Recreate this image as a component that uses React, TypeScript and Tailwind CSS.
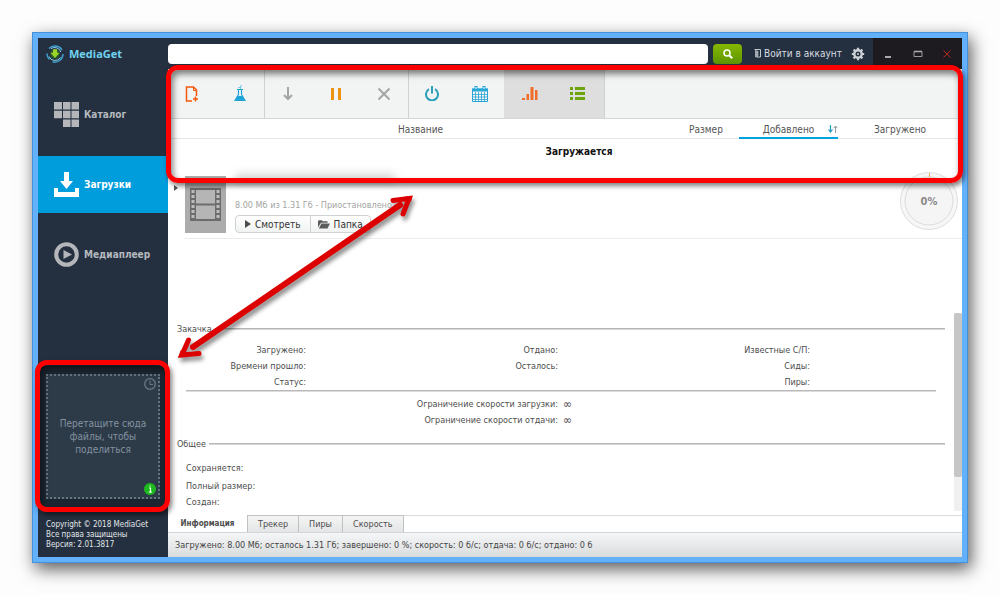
import type { ReactNode } from "react";

const nav = [
  { name: "Каталог", icon: <CatalogIcon />, active: false },
  { name: "Загрузки", icon: <DownloadsIcon />, active: true },
  { name: "Медиаплеер", icon: <PlayerIcon />, active: false },
];

const toolbar = [
  {
    id: "files",
    pressed: false,
    tools: [
      { name: "Добавить файл", icon: <AddFileIcon /> },
      { name: "Лаборатория", icon: <FlaskIcon /> },
    ],
  },
  {
    id: "state",
    pressed: false,
    tools: [
      { name: "Запустить", icon: <DownIcon /> },
      { name: "Пауза", icon: <PauseIcon /> },
      { name: "Удалить", icon: <RemoveIcon /> },
    ],
  },
  {
    id: "plan",
    pressed: false,
    tools: [
      { name: "Выключить", icon: <PowerIcon /> },
      { name: "Расписание", icon: <CalendarIcon /> },
    ],
  },
  {
    id: "view",
    pressed: true,
    tools: [
      { name: "Статистика", icon: <ChartIcon /> },
      { name: "Список", icon: <ListIcon /> },
    ],
  },
];

const stats = [
  ["Загружено:", "Времени прошло:", "Статус:"],
  ["Отдано:", "Осталось:"],
  ["Известные С/П:", "Сиды:", "Пиры:"],
];

const limits = ["Ограничение скорости загрузки:", "Ограничение скорости отдачи:"];

const tabs = ["Информация", "Трекер", "Пиры", "Скорость"];

export default function App() {
  return (
    <div className="flex min-h-screen bg-[#fdfdfd] p-8 font-['DejaVu_Sans_Condensed','DejaVu_Sans',sans-serif] text-[#4d4d4d]">
      <div className="flex min-w-0 flex-1 border border-[#4592da] bg-[#63b1fb] p-[5px] shadow-[3px_6px_16px_rgba(0,0,0,0.65)]">
        <Sidebar />
        <div className="flex min-w-0 flex-1 flex-col bg-white">
          <TopBar />
          <main className="flex min-w-0 flex-1 flex-col">
            <div className="relative">
              <Toolbar />
              <Columns />
              <h2 className="h-[34px] pt-1 pl-7 text-center text-[10px] leading-[18px] font-bold text-[#111]">
                Загружается
              </h2>
              <Callout className="-top-1 -right-px -bottom-[10px] -left-0.5" />
            </div>
            <DownloadRow />
            <Details />
            <Tabs />
          </main>
          <footer className="border-t border-[#d3d6d7] bg-linear-to-b from-[#f5f6f7] to-[#d9dcdd] px-[7px] text-[9px] leading-6 text-[#444]">
            Загружено: 8.00 Мб; осталось 1.31 Гб; завершено: 0 %; скорость: 0
            б/с; отдача: 0 б/с; отдано: 0 б
          </footer>
        </div>
      </div>
    </div>
  );
}

function Sidebar() {
  return (
    <aside className="flex w-[130px] shrink-0 flex-col bg-[#243040]">
      <div className="flex h-8 items-center gap-[5px] pl-2">
        <LogoIcon />
        <span className="font-['Open_Sans',sans-serif] text-[11px] font-bold text-[#6fd3ee]">
          MediaGet
        </span>
      </div>

      <nav className="mt-4 flex flex-col gap-[13px]">
        {nav.map((item) => (
          <a
            key={item.name}
            href="#"
            className={`flex h-[57px] items-center gap-[5px] pl-4 text-[10px] font-bold ${
              item.active ? "bg-[#009ddc] text-white" : "text-[#b4b9be]"
            }`}
          >
            {item.icon}
            {item.name}
          </a>
        ))}
      </nav>

      <div className="relative mt-auto bg-[#1c2632] px-2 py-2">
        <div className="relative flex h-[125px] items-center justify-center border-2 border-dotted border-[#66737f] bg-[#2d3b48] px-2 text-center text-[10px] leading-[13px] text-[#8492a0]">
          Перетащите сюда файлы, чтобы поделиться
          <ClockIcon />
          <InfoIcon />
        </div>
        <Callout className="-top-[6px] -right-0.5 -bottom-[5px] -left-[3px]" />
      </div>

      <p className="mt-[13px] px-2 pb-[7px] text-[8px] leading-[10px] whitespace-nowrap text-[#e2e6e9]">
        Copyright © 2018 MediaGet
        <br />
        Все права защищены
        <br />
        Версия: 2.01.3817
      </p>
    </aside>
  );
}

function TopBar() {
  return (
    <header className="flex h-[31px] items-center bg-[#243040]">
      <input
        aria-label="Поиск"
        className="h-5 min-w-0 flex-1 rounded-sm bg-white px-2 text-[11px] outline-none"
      />
      <button
        aria-label="Найти"
        className="ml-[5px] flex h-5 w-[29px] items-center justify-center rounded-sm bg-linear-to-b from-[#86b800] to-[#5d9400]"
      >
        <svg viewBox="0 0 10 10" className="size-[10px]" fill="none" stroke="#fff" strokeWidth="1.5">
          <circle cx="4" cy="4" r="3" />
          <path d="M6.2 6.2 9.2 9.2" strokeWidth="2" />
        </svg>
      </button>
      <a href="#" className="ml-3 flex items-center gap-[3px] text-[10px] text-[#d8dce0]">
        <svg viewBox="0 0 7 9" className="h-[9px] w-[7px]">
          <path d="M.5.5h6v7.5h-2" fill="none" stroke="#c5c9cd" />
          <path d="M1 1l3.4 1v7L1 8z" fill="#a5abb1" />
        </svg>
        Войти в аккаунт
      </a>
      <button aria-label="Настройки" className="mr-2 ml-[9px]">
        <GearIcon />
      </button>
      <div className="flex h-full w-[89px] items-center bg-[#1e1b20]">
        <button aria-label="Свернуть" className="flex flex-1 justify-center">
          <svg viewBox="0 0 10 10" className="size-[10px]">
            <path d="M2 8h6" stroke="#a9a9a9" strokeWidth="2" />
          </svg>
        </button>
        <button aria-label="Развернуть" className="flex flex-1 justify-center">
          <svg viewBox="0 0 10 10" className="size-[10px]">
            <path d="M1 2.5h8v5H1z" fill="none" stroke="#9a9a9a" />
            <path d="M1 2.5h8" stroke="#a9a9a9" strokeWidth="1.6" />
          </svg>
        </button>
        <button aria-label="Закрыть" className="flex flex-1 justify-center">
          <svg viewBox="0 0 10 10" className="size-[10px]">
            <path d="M1.500 1.500l7 7M8.500 1.500l-7 7" stroke="#b8281f" />
          </svg>
        </button>
      </div>
    </header>
  );
}

function Toolbar() {
  return (
    <div className="flex h-[50px] border-b border-[#d5d6d6] bg-[#f2f4f4]">
      {toolbar.map((group) => (
        <div
          key={group.id}
          className={`flex shadow-[1px_0_0_#d0d2d2] ${group.pressed ? "bg-[#dedede] px-0.5" : ""}`}
        >
          {group.tools.map((tool) => (
            <button
              key={tool.name}
              aria-label={tool.name}
              className="flex w-12 items-center justify-center"
            >
              {tool.icon}
            </button>
          ))}
        </div>
      ))}
    </div>
  );
}

function Columns() {
  return (
    <div className="flex h-5 border-b border-[#e3e6e6] text-center text-[10px] leading-[22px] text-[#555]">
      <button className="min-w-0 flex-1">Название</button>
      <button className="w-[66px]">Размер</button>
      <button className="relative h-5 w-[99px] border-b-2 border-[#00a2e0]">
        Добавлено
        <svg viewBox="0 0 10 8" className="absolute top-[6px] right-0 h-2 w-[10px]" fill="none">
          <path d="M2.500 0v7M.5 4.500l2 2.500 2-2.500" stroke="#1d9cc0" strokeWidth="1.2" />
          <path d="M7.500 8V1M5.500 3.200l2-2.200 2 2.200" stroke="#8e9ba0" />
        </svg>
      </button>
      <button className="w-[124px]">Загружено</button>
    </div>
  );
}

function DownloadRow() {
  return (
    <section className="relative min-h-[140px] flex-1">
      <div className="relative flex h-[66px] pt-[3px] pl-[6px]">
        <svg viewBox="0 0 4 6" className="mt-[9px] mr-[7px] h-[6px] w-1">
          <path d="M0 0l4 3-4 3z" fill="#555" />
        </svg>
        <FilmThumb />
        <div className="ml-[9px] min-w-0">
          <div className="h-5">
            <div className="-mt-0.5 h-[7px] w-40 rounded-full bg-[#888] opacity-40 blur-xs" />
          </div>
          <p className="mt-1 text-[9px] leading-[14px] text-[#a2a59f]">
            8.00 Мб из 1.31 Гб - Приостановлено
          </p>
          <div className="mt-[3px] flex h-[18px] w-fit rounded-sm border border-[#cfd2d2] bg-linear-to-b from-white to-[#f1f2f2] text-[10px] text-[#333]">
            <button className="flex items-center gap-1 border-r border-[#cfd2d2] px-[9px]">
              <svg viewBox="0 0 6 8" className="h-2 w-[6px]">
                <path d="M0 0l6 4-6 4z" fill="#4c4c4c" />
              </svg>
              Смотреть
            </button>
            <button className="flex items-center gap-1 px-[7px]">
              <FolderIcon />
              Папка
            </button>
          </div>
        </div>
        <div className="ml-auto mr-1">
          <ProgressRing />
        </div>
        <div className="absolute right-0 bottom-0 left-4 border-b border-[#ececec]" />
      </div>
      <ArrowMark />
    </section>
  );
}

function Details() {
  return (
    <section className="flex h-[202px] overflow-hidden text-[9px]">
      <div className="min-w-0 flex-1 pt-[9px] pr-[18px] pl-3">
        <Legend>Закачка</Legend>
        <div className="mt-[6px] grid grid-cols-3 leading-4">
          {stats.map((column) => (
            <dl key={column[0]} className="w-1/2 text-right whitespace-nowrap">
              {column.map((label) => (
                <dt key={label}>{label}</dt>
              ))}
            </dl>
          ))}
        </div>
        <hr className="ml-[6px] h-0.5 border-t border-b border-t-[#b9b9b9] border-b-[#dcdcdc]" />
        <dl className="mt-1 leading-4">
          {limits.map((label) => (
            <div key={label} className="grid grid-cols-2">
              <dt className="text-right">{label}</dt>
              <dd className="pl-[5px] text-xs leading-4">∞</dd>
            </div>
          ))}
        </dl>
        <div className="mt-[9px]">
          <Legend>Общее</Legend>
        </div>
        <div className="mt-[9px] pl-[6px] leading-4">
          <p className="mb-0.5">Сохраняется:</p>
          <p>Полный размер:</p>
          <p>Создан:</p>
        </div>
      </div>
      <div className="mb-1 w-2 bg-[#f0f0f0]">
        <div className="h-[164px] rounded-xs bg-[#c6c6c6]" />
      </div>
    </section>
  );
}

function Legend({ children }: { children: ReactNode }) {
  return (
    <div className="-mr-[9px] -ml-[3px] flex items-center gap-[3px]">
      <h3 className="leading-[14px]">{children}</h3>
      <span className="h-0.5 flex-1 border-t border-b border-t-[#b5b5b5] border-b-[#d8d8d8]" />
    </div>
  );
}

function Tabs() {
  return (
    <div role="tablist" className="flex h-[17px] text-[9px] leading-4">
      {tabs.map((tab, i) => (
        <button
          key={tab}
          role="tab"
          aria-selected={i === 0}
          className={
            i === 0
              ? "w-[79px] bg-white text-center text-[8px] font-bold"
              : "border-t border-l border-[#bfc2c3] bg-linear-to-b from-[#f5f5f5] to-[#e3e5e6] px-[10px]"
          }
        >
          {tab}
        </button>
      ))}
      <span className="flex-1 border-t border-l border-t-[#dcdcdc] border-l-[#bfc2c3]" />
    </div>
  );
}

function Callout({ className }: { className: string }) {
  return (
    <div
      className={`pointer-events-none absolute z-10 rounded-xl border-5 border-[#ff0000] shadow-[2px_3px_5px_rgba(0,0,0,0.5),inset_2px_4px_6px_rgba(0,0,0,0.5)] ${className}`}
    />
  );
}

function ArrowMark() {
  return (
    <svg
      viewBox="0 0 250 180"
      className="pointer-events-none absolute top-[17px] left-[6px] z-20 h-[180px] w-[250px] drop-shadow-[2px_4px_2px_rgba(0,0,0,0.45)]"
      fill="none"
      stroke="#dc0000"
      strokeWidth="5"
      strokeLinecap="round"
    >
      <path d="M19 157 226 15" strokeWidth="6" />
      <path d="M219 10.500 235 8.500 229 24" />
      <path d="M14.500 150 8 165 25 163.500" />
      <path d="M238.500 6 231 6.500 237 12zM4 167.500l3-8 6 7.500z" fill="#dc0000" stroke="none" />
    </svg>
  );
}

function ProgressRing() {
  return (
    <svg viewBox="0 0 58 58" className="-mt-1 size-[58px]" role="img">
      <circle cx="29" cy="29" r="28.500" fill="#f7f7f7" stroke="#dedede" />
      <circle cx="29" cy="29" r="24" fill="#f5f5f5" stroke="#dcdcdc" />
      <path d="M29.500 1v4" stroke="#f0b060" />
      <text x="29" y="33" textAnchor="middle" fontSize="11" fontWeight="bold" fill="#8a8a8a">
        0%
      </text>
    </svg>
  );
}

function FilmThumb() {
  const holes = [0, 1, 2, 3, 4, 5];
  return (
    <svg viewBox="0 0 41 57" className="h-[57px] w-[41px] shrink-0">
      <path d="M0 0h41v57H0z" fill="#acacac" />
      <path d="M5 12h31v33H5z" fill="#6c6c6c" />
      <path d="M11 14h19v13.500H11zM11 29.500h19V43H11z" fill="#b5b5b5" />
      {holes.map((i) => (
        <path
          key={i}
          d={`M6.500 ${14 + i * 5}h3v3h-3zM31.500 ${14 + i * 5}h3v3h-3z`}
          fill="#bdbdbd"
        />
      ))}
    </svg>
  );
}

function FolderIcon() {
  return (
    <svg viewBox="0 0 12 9" className="h-[9px] w-3" fill="#5c5c5c">
      <path d="M0 7.500V1l.8-.8h3l1 1.100H9.500v1.500H3z" />
      <path d="M3.400 3.600H12L9.500 8.600H.9z" />
    </svg>
  );
}

function GearIcon() {
  return (
    <svg viewBox="0 0 14 14" className="size-[14px]" fill="none" stroke="#cdd1d5">
      <circle cx="7" cy="7" r="3.700" strokeWidth="2.400" />
      <path
        d="M7 .8v2M7 11.200v2M.8 7h2M11.200 7h2M2.600 2.600 4 4M10 10l1.400 1.400M11.400 2.600 10 4M4 10l-1.400 1.400"
        strokeWidth="2.200"
      />
      <circle cx="7" cy="7" r="1" fill="#cdd1d5" stroke="none" />
    </svg>
  );
}

function LogoIcon() {
  return (
    <svg viewBox="0 0 18 18" className="size-[18px]" fill="none">
      <path
        d="M3 3.600A8.200 8.200 0 0 1 16 5M17 9A8.200 8.200 0 0 1 6.500 16.800M1 8.500a8 8 0 0 0 2.500 6"
        stroke="#3f9fd0"
        strokeWidth="1.500"
      />
      <path d="M5 3.600A6.500 6.500 0 0 1 14.800 7M14.500 12.500A6.500 6.500 0 0 1 3 11.500" stroke="#8fd3ee" />
      <circle cx="9" cy="9" r="4.800" fill="#2b5a2a" />
      <path d="M7 4.200h4v3.600h2.500L9 13 4.500 7.800H7z" fill="#9bd42c" />
    </svg>
  );
}

function CatalogIcon() {
  return (
    <svg viewBox="0 0 25 25" className="size-[25px]" fill="#b4b6b9">
      <path d="M0 0h8v7.500H0zM9 0h7.500v7.500H9zM17.500 0H25v7.500h-7.500zM0 8.700h8v7.500H0zM9 8.700h7.500v7.500H9zM17.500 8.700H25v7.500h-7.500zM9 17.500h7.500V25H9zM17.500 17.500H25V25h-7.500z" />
    </svg>
  );
}

function DownloadsIcon() {
  return (
    <svg viewBox="0 0 25 25" className="size-[25px]" fill="#fff">
      <path d="M10 0h5v9h4l-6.500 8L6 9h4z" />
      <path d="M0 16h4v4h17v-4h4v9H0z" />
    </svg>
  );
}

function PlayerIcon() {
  return (
    <svg viewBox="0 0 25 25" className="size-[25px]">
      <circle cx="12.500" cy="12.500" r="10.300" fill="none" stroke="#b4b6b9" strokeWidth="4" />
      <path d="M9.500 8l8.500 4.500L9.500 17z" fill="#b4b6b9" />
    </svg>
  );
}

function ClockIcon() {
  return (
    <svg
      viewBox="0 0 12 12"
      className="absolute top-0.5 right-0.5 size-3"
      fill="none"
      stroke="#6a7784"
    >
      <circle cx="6" cy="6" r="5.300" strokeWidth="1.300" />
      <path d="M6 2.500V6.500H9" />
    </svg>
  );
}

function InfoIcon() {
  return (
    <svg viewBox="0 0 12 12" className="absolute right-0.5 bottom-0.5 size-3">
      <circle cx="6" cy="6" r="6" fill="#1db81d" />
      <path d="M5 5h1.500v4M4.800 9.200h3M5.400 3h1.300" stroke="#e8ffe8" strokeWidth="1.200" fill="none" />
    </svg>
  );
}

function AddFileIcon() {
  return (
    <svg viewBox="0 0 14 16" className="h-4 w-[14px]" fill="none" stroke="#f4560a">
      <path d="M7 15H1.500V1H8.500l3 3v6" strokeWidth="1.500" />
      <path d="M8.500 1v3.500h3" />
      <path d="M10.500 10.500v5M8 13h5" strokeWidth="1.500" />
    </svg>
  );
}

function FlaskIcon() {
  return (
    <svg viewBox="0 0 12 17" className="h-[17px] w-3" fill="none" stroke="#1fa5d8">
      <path d="M3 4.500h6M4.500 4.500v5L1 15.500h10L7.500 9.500v-5" strokeWidth="1.200" />
      <path d="M3.500 11.500h5l2 4h-9z" fill="#1fa5d8" />
      <path d="M4.500 2.500h1M6.500 .8h1M6 2.800h1" strokeWidth="1.200" />
    </svg>
  );
}

function DownIcon() {
  return (
    <svg viewBox="0 0 10 14" className="h-[14px] w-[10px]" fill="none" stroke="#a5a5a5" strokeWidth="2">
      <path d="M5 0v12M1 8l4 4 4-4" />
    </svg>
  );
}

function PauseIcon() {
  return (
    <svg viewBox="0 0 12 14" className="h-[14px] w-3">
      <path d="M1 1h3v12H1zM8 1h3v12H8z" fill="#ee9211" />
    </svg>
  );
}

function RemoveIcon() {
  return (
    <svg viewBox="0 0 14 14" className="size-[14px]">
      <path d="M1.500 1.500l11 11M12.500 1.500l-11 11" stroke="#a5a5a5" strokeWidth="2" />
    </svg>
  );
}

function PowerIcon() {
  return (
    <svg viewBox="0 0 14 15" className="h-[15px] w-[14px]" fill="none" stroke="#2c9fba" strokeWidth="2">
      <path d="M4 3.200a6 6 0 1 0 6 0M7 0v7.500" />
    </svg>
  );
}

function CalendarIcon() {
  return (
    <svg viewBox="0 0 16 16" className="size-4" fill="none" stroke="#29a6d8">
      <path d="M.5 3h15v12.500H.5z" />
      <path d="M0 2.500h16v3H0z" fill="#29a6d8" stroke="none" />
      <path d="M4 0v3.500M12 0v3.500" strokeWidth="3" />
      <path d="M4 1v2M12 1v2" stroke="#fff" />
      <path d="M3.500 6v9M6.500 6v9M9.500 6v9M12.500 6v9M1 8.500h14M1 11h14M1 13.500h14" strokeWidth=".8" />
    </svg>
  );
}

function ChartIcon() {
  return (
    <svg viewBox="0 0 16 14" className="h-[14px] w-4" fill="#ef6c2a">
      <path d="M0 11h3v2H0zM4.500 7h2.500v6H4.500zM8.500 0h3v13h-3zM13 3h2.500v10H13z" />
    </svg>
  );
}

function ListIcon() {
  return (
    <svg viewBox="0 0 16 14" className="h-[14px] w-4" fill="#6ba40c">
      <path d="M0 0h3v3H0zM0 5h3v3H0zM0 10h3v3H0zM5 0h10v3H5zM5 5h10v3H5zM5 10h10v3H5z" />
    </svg>
  );
}
